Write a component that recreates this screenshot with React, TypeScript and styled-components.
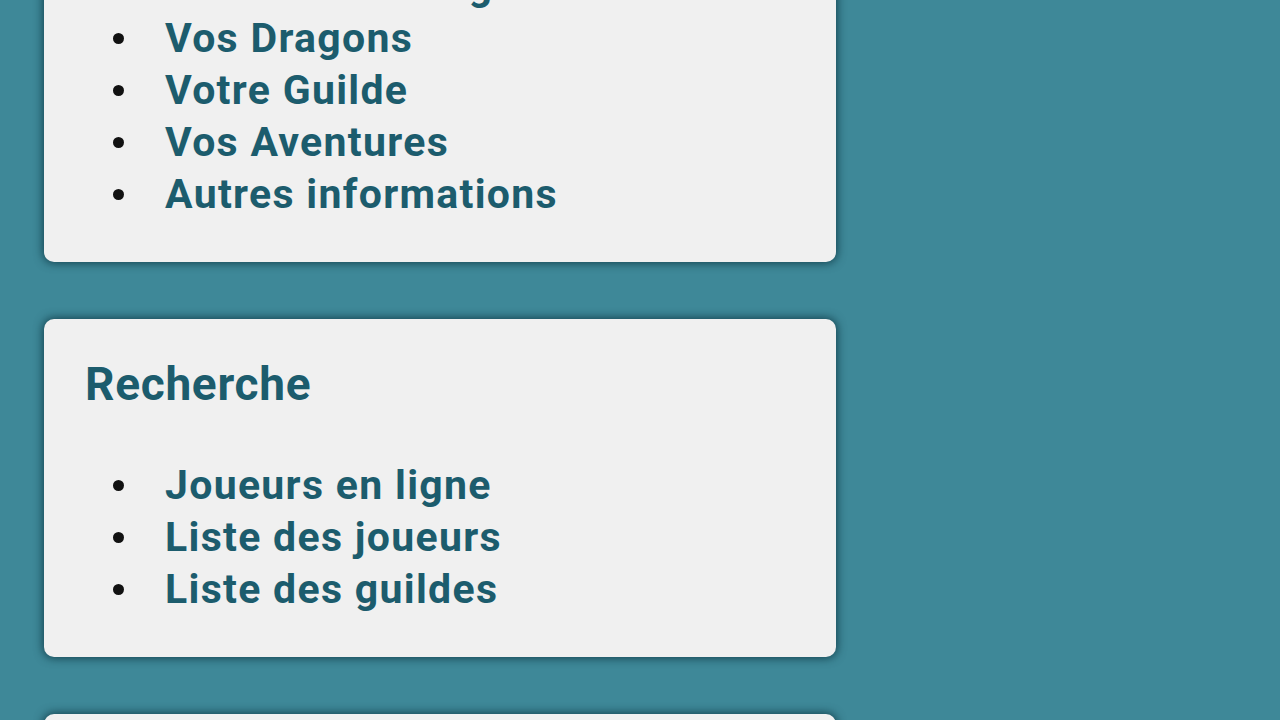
import React from "react";
import styled, { createGlobalStyle } from "styled-components";

const GlobalStyle = createGlobalStyle`
  html, body {
    margin: 0;
    padding: 0;
    background: #3e8898;
    font-family: Roboto, "Liberation Sans", sans-serif;
    overflow: hidden;
  }
`;

// the page is scrolled: the first card starts above the top edge
const Page = styled.div`
  display: flex;
  flex-direction: column;
  gap: 57px;
  width: 792px;
  padding: 0 0 0 44px;
  margin-top: -180px;
`;

const Card = styled.section`
  background: #f0f0f0;
  border-radius: 10px;
  box-shadow: 0 0 10px 1px rgba(12, 52, 64, 0.85);
  padding: 39px 41px 42px;
`;

const Title = styled.h3`
  margin: 0 0 49px;
  font-size: 46px;
  line-height: 52px;
  font-weight: 700;
  letter-spacing: 0.7px;
  color: #1c5c6d;
`;

const List = styled.ul`
  list-style: none;
  margin: 0;
  padding: 0 0 0 28px;
`;

const Item = styled.li`
  display: flex;
  align-items: center;
  gap: 41px;
  height: 52px;
  font-size: 41px;
  font-weight: 700;
  letter-spacing: 1.3px;
  color: #1c5c6d;
`;

const Bullet = styled.span`
  width: 11px;
  height: 11px;
  border-radius: 50%;
  background: #111;
  flex: 0 0 11px;
`;

const LinkText = styled.a`
  color: inherit;
  text-decoration: none;
  white-space: nowrap;
`;

const sections = [
  {
    title: "Votre compte",
    items: [
      "Votre Personnage",
      "Vos Dragons",
      "Votre Guilde",
      "Vos Aventures",
      "Autres informations",
    ],
  },
  {
    title: "Recherche",
    items: ["Joueurs en ligne", "Liste des joueurs", "Liste des guildes"],
  },
  {
    title: "Classements",
    items: ["Meilleurs joueurs", "Meilleures guildes"],
  },
];

const App: React.FC = () => (
  <>
    <GlobalStyle />
    <Page>
      {sections.map((s) => (
        <Card key={s.title}>
          <Title>{s.title}</Title>
          <List>
            {s.items.map((it) => (
              <Item key={it}>
                <Bullet />
                <LinkText href="#">{it}</LinkText>
              </Item>
            ))}
          </List>
        </Card>
      ))}
    </Page>
  </>
);

export default App;
